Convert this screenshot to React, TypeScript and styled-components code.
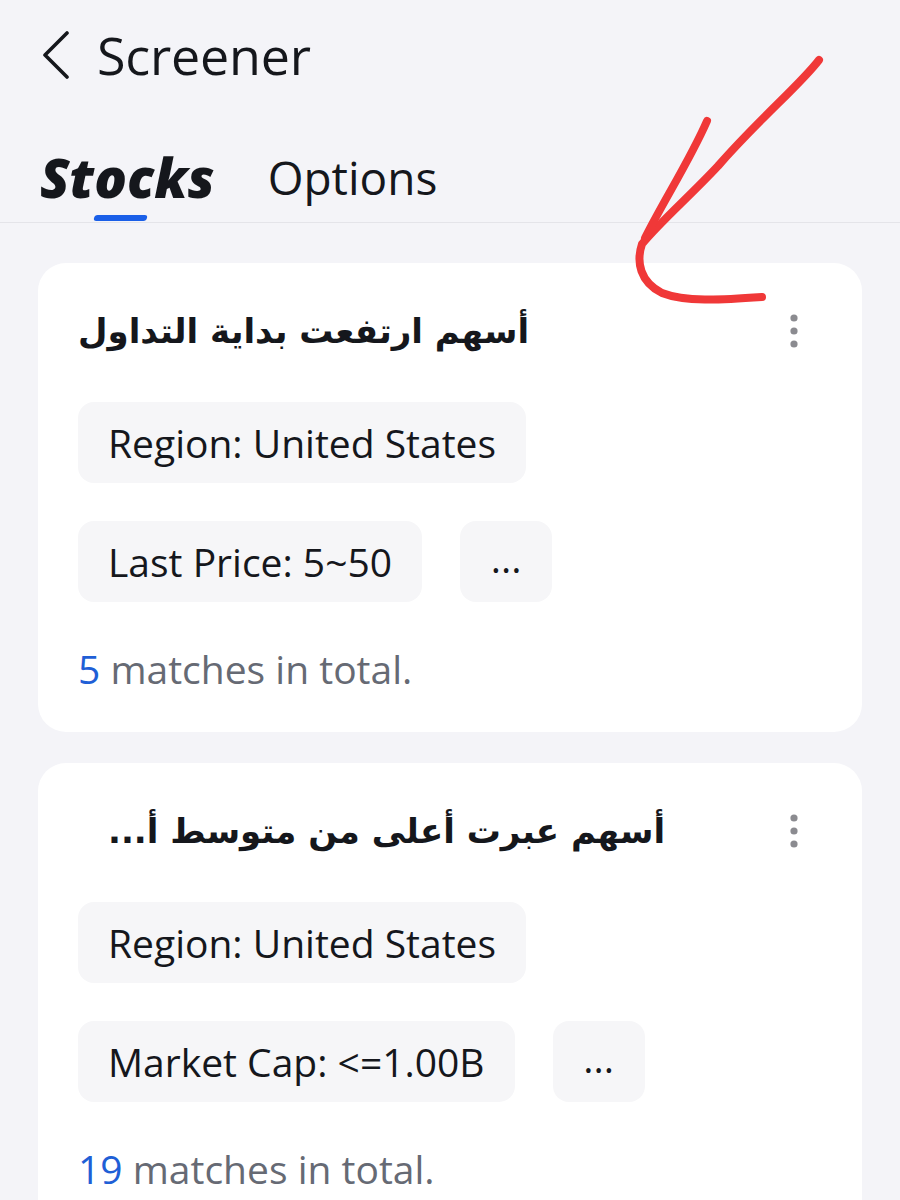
import {createGlobalStyle} from 'styled-components'
import styled from 'styled-components'

const GlobalStyle = createGlobalStyle`
  body {
    margin: 0;
    background: #f4f4f8;
    font-family: "Open Sans", "Noto Sans", "DejaVu Sans", sans-serif;
    color: #15171c;
  }
`

const Page = styled.div`
  position: relative;
  min-height: 1200px;
  overflow: hidden;
`

const Header = styled.header`
  display: flex;
  align-items: center;
  gap: 25px;
  height: 72px;
  padding: 19px 0 0 40px;
`

const BackIcon = styled.svg`
  width: 32px;
  height: 48px;
  flex-shrink: 0;
`

const PageTitle = styled.h1`
  margin: 0;
  font-size: 52px;
  font-weight: 500;
  line-height: 72px;
  letter-spacing: -0.2px;
`

const Tabs = styled.nav`
  display: flex;
  align-items: flex-end;
  gap: 53px;
  margin-top: 55px;
  padding: 0 40px;
  border-bottom: 1px solid #e4e4e9;
`

const Tab = styled.div<{ active?: boolean }>`
  position: relative;
  padding-bottom: 14px;
  font-size: ${p => (p.active ? '54px' : '46px')};
  line-height: 62px;
  font-weight: ${p => (p.active ? 800 : 400)};
  font-style: ${p => (p.active ? 'italic' : 'normal')};
  color: #15171c;

  &::after {
    content: "";
    display: ${p => (p.active ? 'block' : 'none')};
    position: absolute;
    left: 54px;
    bottom: 1px;
    width: 53px;
    height: 6px;
    border-radius: 3px;
    background: #1a5fe8;
    transform: skewX(-14deg);
  }
`

const CardList = styled.main`
  display: flex;
  flex-direction: column;
  gap: 31px;
  padding: 40px 38px;
`

const Card = styled.section`
  background: #ffffff;
  border-radius: 28px;
  padding: 36px 40px 38px;
`

const CardHeader = styled.div`
  display: flex;
  align-items: center;
  justify-content: space-between;
  height: 64px;
  margin-bottom: 39px;
`

const Title = styled.h2<{ indent?: number }>`
  margin: 0;
  padding-left: ${p => p.indent ?? 0}px;
  font-family: "DejaVu Sans", "Noto Sans", sans-serif;
  font-size: 34px;
  font-weight: 700;
  line-height: 64px;
  color: #15171c;

  span {
    display: inline-block;
    direction: rtl;
  }
`

const KebabIcon = styled.svg`
  width: 12px;
  height: 36px;
  margin-right: 22px;
`

const Filters = styled.div`
  display: flex;
  flex-direction: column;
  align-items: flex-start;
  gap: 38px;
`

const FilterRow = styled.div`
  display: flex;
  gap: 38px;
`

const Chip = styled.div<{ more?: boolean }>`
  display: flex;
  align-items: center;
  justify-content: center;
  height: 81px;
  min-width: ${p => (p.more ? '92px' : 'auto')};
  padding: ${p => (p.more ? '0 0 8px' : '0 30px')};
  box-sizing: border-box;
  border-radius: 16px;
  background: #f6f6f8;
  font-size: 39px;
  color: #15171c;
`

const Matches = styled.p`
  margin: 42px 0 0;
  font-size: 39px;
  line-height: 50px;
  color: #666a74;

  b {
    font-weight: 400;
    color: #1f5fd6;
  }
`

const Annotation = styled.svg`
  position: absolute;
  top: 0;
  left: 0;
  pointer-events: none;
`

type Screen = {
    title: string
    indent?: number
    filters: string[][]
    count: number
}

const screens: Screen[] = [
    {
        title: 'أسهم ارتفعت بداية التداول',
        filters: [['Region: United States'], ['Last Price: 5~50', '...']],
        count: 5,
    },
    {
        title: 'أسهم عبرت أعلى من متوسط  أ...',
        indent: 30,
        filters: [['Region: United States'], ['Market Cap: <=1.00B', '...']],
        count: 19,
    },
]

const Kebab = () => (
    <KebabIcon viewBox="0 0 12 36">
        <circle cx="6" cy="5" r="3.6" fill="#8b8b90"/>
        <circle cx="6" cy="18" r="3.6" fill="#8b8b90"/>
        <circle cx="6" cy="31" r="3.6" fill="#8b8b90"/>
    </KebabIcon>
)

export default function App() {
    return (
        <Page>
            <GlobalStyle/>
            <Header>
                <BackIcon viewBox="0 0 32 48">
                    <path d="M27 14 L5 36 L27 58" transform="translate(0 -12)" fill="none"
                          stroke="#15171c" strokeWidth="3.6" strokeLinecap="round" strokeLinejoin="round"/>
                </BackIcon>
                <PageTitle>Screener</PageTitle>
            </Header>
            <Tabs>
                <Tab active>Stocks</Tab>
                <Tab>Options</Tab>
            </Tabs>
            <CardList>
                {screens.map(screen => (
                    <Card key={screen.count}>
                        <CardHeader>
                            <Title indent={screen.indent}><span>{screen.title}</span></Title>
                            <Kebab/>
                        </CardHeader>
                        <Filters>
                            {screen.filters.map((row, i) => (
                                <FilterRow key={i}>
                                    {row.map(f => (
                                        <Chip key={f} more={f === '...'}>{f}</Chip>
                                    ))}
                                </FilterRow>
                            ))}
                        </Filters>
                        <Matches><b>{screen.count}</b> matches in total.</Matches>
                    </Card>
                ))}
            </CardList>
            <Annotation width="900" height="320" viewBox="0 0 900 320">
                <g fill="none" stroke="#f03838" strokeWidth="8" strokeLinecap="round" strokeLinejoin="round">
                    <path d="M819 60 C 800 85, 760 118, 718 166 C 690 196, 660 222, 642 244 C 636 262, 640 282, 662 293 C 685 302, 720 300, 762 297"/>
                    <path d="M707 121 C 690 160, 664 200, 645 238"/>
                </g>
            </Annotation>
        </Page>
    )
}
